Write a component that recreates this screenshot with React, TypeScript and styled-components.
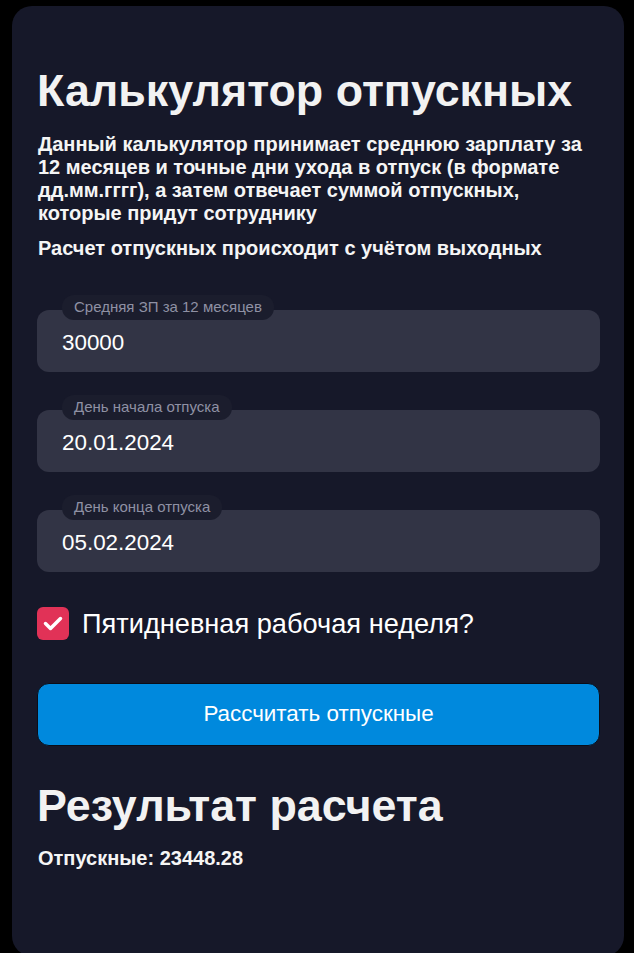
import React, { useState } from "react";
import styled, { createGlobalStyle } from "styled-components";

const GlobalStyle = createGlobalStyle`
  html, body {
    margin: 0;
    padding: 0;
    background: #000;
  }
  body {
    font-family: "Liberation Sans", Arial, sans-serif;
    color: #f0f0f0;
  }
`;

function Field({ label, value }: { label: string; value: string }) {
  return (
    <FieldBox>
      <FieldLabel>{label}</FieldLabel>
      <FieldInput defaultValue={value} />
    </FieldBox>
  );
}

function App() {
  const [fiveDays, setFiveDays] = useState(true);

  return (
    <Page>
      <GlobalStyle />
      <Card>
        <Title>Калькулятор отпускных</Title>
        <Description>
          Данный калькулятор принимает среднюю зарплату за 12 месяцев и точные
          дни ухода в отпуск (в формате дд.мм.гггг), а затем отвечает суммой
          отпускных, которые придут сотруднику
        </Description>
        <Note>Расчет отпускных происходит с учётом выходных</Note>

        <Form>
          <Field label="Средняя ЗП за 12 месяцев" value="30000" />
          <Field label="День начала отпуска" value="20.01.2024" />
          <Field label="День конца отпуска" value="05.02.2024" />

          <CheckRow onClick={() => setFiveDays(!fiveDays)}>
            <CheckBox checked={fiveDays}>
              {fiveDays && (
                <svg width="32" height="32" viewBox="0 0 32 32">
                  <polyline
                    points="8.5,16.5 13.5,21.5 23.5,11.5"
                    fill="none"
                    stroke="#fff"
                    strokeWidth="3.5"
                    strokeLinecap="round"
                    strokeLinejoin="round"
                  />
                </svg>
              )}
            </CheckBox>
            <CheckLabel>Пятидневная рабочая неделя?</CheckLabel>
          </CheckRow>

          <SubmitButton type="button">Рассчитать отпускные</SubmitButton>
        </Form>

        <ResultTitle>Результат расчета</ResultTitle>
        <ResultText>Отпускные: 23448.28</ResultText>
      </Card>
    </Page>
  );
}

const Page = styled.div`
  padding: 6px 10px 0 12px;
`;

const Card = styled.div`
  background-color: #161829;
  border-radius: 20px;
  padding: 59px 24px 86px 25px;
  display: flex;
  flex-direction: column;
`;

const Title = styled.h1`
  margin: 0;
  font-size: 44.8px;
  line-height: 51.5px;
  font-weight: 700;
  color: #f2f2f2;
`;

const Description = styled.p`
  margin: 16px 0 0 1px;
  font-size: 20px;
  line-height: 23.3px;
  font-weight: 700;
  color: #f5f5f5;
`;

const Note = styled(Description)`
  margin-top: 11px;
`;

const Form = styled.div`
  display: flex;
  flex-direction: column;
  margin-top: 50px;
`;

const FieldBox = styled.div`
  position: relative;
  margin-bottom: 38px;
`;

const FieldLabel = styled.span`
  position: absolute;
  left: 25px;
  top: -15px;
  height: 25px;
  padding: 0 12px;
  border-radius: 12px;
  background-color: #1b1d2d;
  color: #8f91a4;
  font-size: 15px;
  line-height: 24px;
`;

const FieldInput = styled.input`
  display: block;
  box-sizing: border-box;
  width: 100%;
  height: 62px;
  border: none;
  outline: none;
  border-radius: 12px;
  background-color: #323445;
  color: #fff;
  font-family: "Liberation Sans", Arial, sans-serif;
  font-size: 22.4px;
  padding: 4px 25px 0;
`;

const CheckRow = styled.label`
  display: flex;
  align-items: center;
  gap: 13px;
  margin-top: -3px;
  cursor: pointer;
`;

const CheckBox = styled.span<{ checked: boolean }>`
  width: 32px;
  height: 33px;
  flex-shrink: 0;
  border-radius: 6px;
  background-color: ${(p) => (p.checked ? "#e13257" : "#323445")};
  display: flex;
  align-items: center;
  justify-content: center;
`;

const CheckLabel = styled.span`
  font-size: 27.2px;
  line-height: 31px;
  color: #fff;
`;

const SubmitButton = styled.button`
  box-sizing: border-box;
  margin-top: 43px;
  height: 63px;
  border: 1px solid #0a0d18;
  border-radius: 12px;
  background-color: #0089dd;
  color: #fff;
  font-family: "Liberation Sans", Arial, sans-serif;
  font-size: 22.4px;
  cursor: pointer;
`;

const ResultTitle = styled(Title)`
  margin-top: 34px;
`;

const ResultText = styled.p`
  margin: 15.5px 0 0 1px;
  font-size: 20px;
  line-height: 23.3px;
  font-weight: 700;
  color: #f5f5f5;
`;

export default App;
